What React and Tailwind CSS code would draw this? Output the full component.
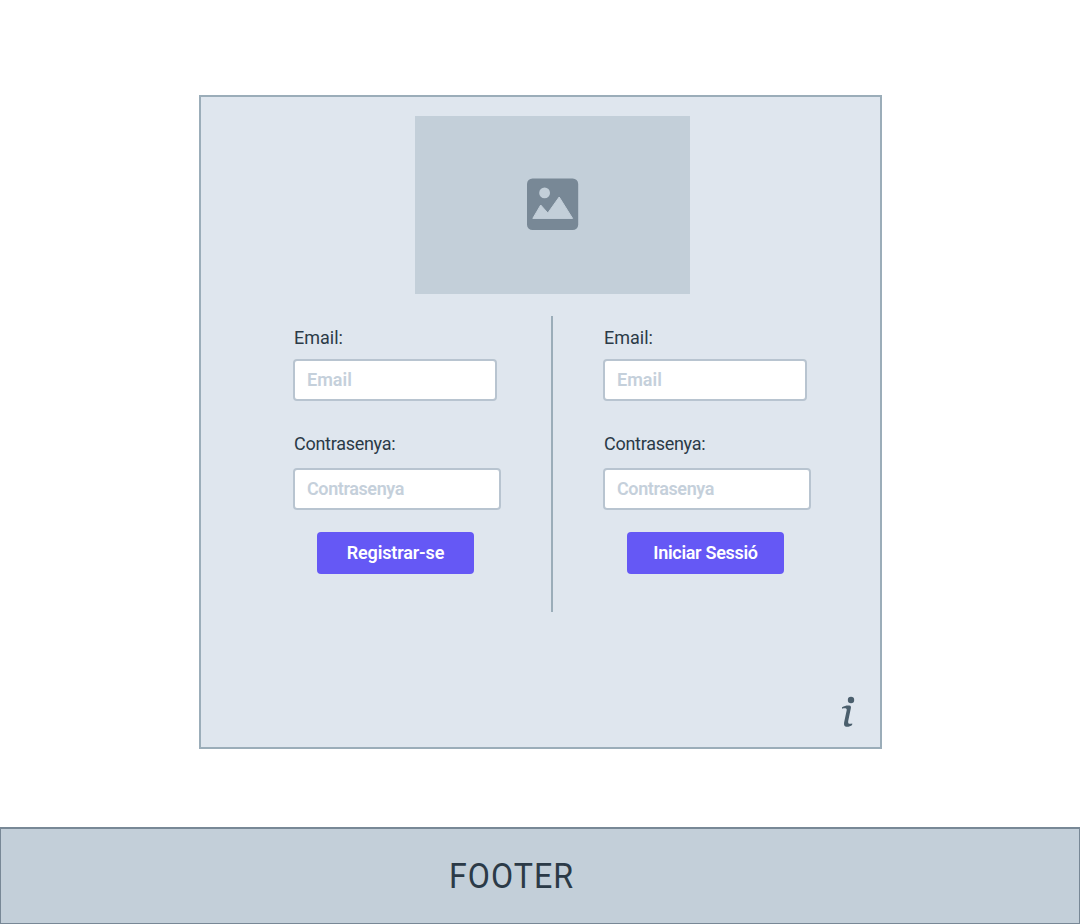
function ImageIcon() {
  return (
    <svg width="52" height="52" viewBox="0 0 52 52" aria-hidden="true">
      <rect y="0.4" width="51.2" height="51.6" rx="5.5" fill="#788896" />
      <circle cx="17.6" cy="14.9" r="5.4" fill="#c3cfd9" />
      <path
        d="M5.8 40.4 L13.7 27 L20.8 35 L32.2 19 L45.6 40.4 Z"
        fill="#c3cfd9"
        stroke="#c3cfd9"
        strokeWidth="1"
        strokeLinejoin="round"
      />
    </svg>
  );
}

function InfoIcon() {
  return (
    <svg width="16" height="32" viewBox="0 0 16 32" aria-label="Info">
      <circle cx="11" cy="4" r="3.2" fill="#4b5f6d" />
      <path
        d="M2 11.2 C4.5 9.7 6.8 9.3 9.2 9.5 C11 9.7 11.2 10.8 10.8 12.6 L8.2 25 C7.7 28 9.3 28.3 12.3 27.4 L12.1 29 C9.5 31.2 4.2 31.8 4 28.2 C4 27.3 4.1 26.5 4.3 25.6 L6.7 14.2 C7.1 12.2 5 12 2 12.7 Z"
        fill="#4b5f6d"
      />
    </svg>
  );
}

function AuthForm({ action, actionTracking }) {
  return (
    <form className="flex w-[208px] flex-col pt-[11px]" onSubmit={(e) => e.preventDefault()}>
      <span className="ml-px h-[22px] text-[18px] leading-[22px] text-[#2b3a47]">Email:</span>
      <input
        type="text"
        placeholder="Email"
        className="mt-[10px] h-[42px] w-[204px] rounded-[4px] border-2 border-[#b8c4d0] bg-white px-3 pb-0.5 text-[18px] font-semibold placeholder:text-[#c5d0db]"
      />
      <span className="mt-8 ml-px h-[22px] text-[18px] leading-[22px] tracking-[-0.28px] text-[#2b3a47]">
        Contrasenya:
      </span>
      <input
        type="text"
        placeholder="Contrasenya"
        className="mt-[13px] h-[42px] w-[208px] rounded-[4px] border-2 border-[#b8c4d0] bg-white px-3 pb-0.5 text-[18px] font-semibold tracking-[-0.4px] placeholder:text-[#c5d0db]"
      />
      <button
        className={`mt-[22px] ml-6 h-[42px] w-[157px] rounded-[4px] bg-[#6558f5] pb-0.5 text-[18px] font-semibold text-white ${actionTracking}`}
      >
        {action}
      </button>
    </form>
  );
}

export default function App() {
  return (
    <div className="flex h-[924px] w-[1080px] flex-col bg-white font-['Roboto',sans-serif]">
      <main className="flex flex-1 flex-col pt-[95px] pl-[199px]">
        <section className="flex h-[654px] w-[683px] flex-col border-2 border-[#9badb9] bg-[#dfe6ee] pt-[19px]">
          <div className="flex justify-center pl-6">
            <div className="flex h-[178px] w-[275px] items-center justify-center bg-[#c3cfd9] pb-0.5">
              <ImageIcon />
            </div>
          </div>
          <div className="mt-[22px] flex h-[296px] pl-[92px]">
            <AuthForm action="Registrar-se" actionTracking="tracking-[-0.15px]" />
            <div className="mr-[50px] ml-[50px] w-0.5 bg-[#9badb9]" />
            <AuthForm action="Iniciar Sessió" actionTracking="tracking-[-0.3px]" />
          </div>
          <div className="mt-auto flex justify-end pr-6 pb-[19px]">
            <InfoIcon />
          </div>
        </section>
      </main>
      <footer className="flex h-[97px] items-center border border-t-2 border-[#788896] bg-[#c3cfd9] pl-[448px]">
        <span className="origin-left scale-x-[0.92] text-[35px] leading-none tracking-[1.1px] text-[#2b3a47]">FOOTER</span>
      </footer>
    </div>
  );
}
